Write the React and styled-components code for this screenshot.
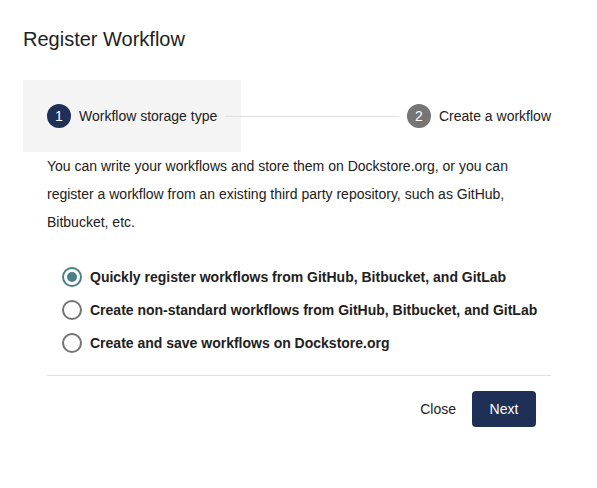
import React, { useState } from "react";
import styled, { createGlobalStyle } from "styled-components";

const GlobalStyle = createGlobalStyle`
  body {
    margin: 0;
    background: #fff;
    font-family: "Liberation Sans", Arial, sans-serif;
    color: rgba(0, 0, 0, 0.87);
  }
`;

const Dialog = styled.div`
  padding: 23px 22px 24px 23px;
`;

const Title = styled.h2`
  margin: 0 0 25px;
  font-size: 20px;
  font-weight: 400;
  line-height: 32px;
  color: #212121;
`;

const StepHeader = styled.div`
  display: flex;
  align-items: center;
  height: 72px;
`;

const Step = styled.div`
  display: flex;
  align-items: center;
  height: 100%;
  padding: 0 24px;
  background: ${(p) => (p.$focused ? "#f4f4f4" : "transparent")};
  box-sizing: border-box;
`;

const StepIcon = styled.div`
  width: 24px;
  height: 24px;
  border-radius: 50%;
  background: ${(p) => (p.$active ? "#1f3056" : "#757575")};
  color: #fff;
  display: flex;
  align-items: center;
  justify-content: center;
  font-size: 14px;
  margin-right: 8px;
`;

const StepLabel = styled.span`
  font-size: 14px;
  color: #212121;
  white-space: nowrap;
`;

const Line = styled.div`
  flex: 1;
  border-top: 1px solid #e0e0e0;
  margin: 0 -16px;
`;

const Content = styled.div`
  padding: 0 24px;
`;

const Text = styled.p`
  margin: 0;
  font-size: 14px;
  line-height: 28px;
  color: #212121;
`;

const RadioGroup = styled.div`
  display: flex;
  flex-direction: column;
  margin: 24px 0 0 15px;
`;

const RadioRow = styled.label`
  display: flex;
  align-items: center;
  height: 33px;
  cursor: pointer;
`;

const Ring = styled.span`
  width: 20px;
  height: 20px;
  box-sizing: border-box;
  border-radius: 50%;
  border: 2px solid ${(p) => (p.$checked ? "#4a7f85" : "#737373")};
  display: flex;
  align-items: center;
  justify-content: center;
  margin-right: 8px;

  &::after {
    content: "";
    width: 10px;
    height: 10px;
    border-radius: 50%;
    background: #4a7f85;
    display: ${(p) => (p.$checked ? "block" : "none")};
  }
`;

const RadioText = styled.span`
  font-size: 14px;
  font-weight: 700;
  color: #212121;
`;

const Divider = styled.hr`
  border: none;
  border-top: 1px solid #e0e0e0;
  margin: 16px 0 15px;
`;

const Actions = styled.div`
  display: flex;
  justify-content: flex-end;
  padding-right: 15px;
`;

const Button = styled.button`
  height: 36px;
  min-width: 64px;
  padding: 0 16px;
  border: none;
  border-radius: 4px;
  font-family: inherit;
  font-size: 14px;
  cursor: pointer;
  background: ${(p) => (p.$primary ? "#1f3056" : "transparent")};
  color: ${(p) => (p.$primary ? "#fff" : "#212121")};
`;

const options = [
  "Quickly register workflows from GitHub, Bitbucket, and GitLab",
  "Create non-standard workflows from GitHub, Bitbucket, and GitLab",
  "Create and save workflows on Dockstore.org",
];

export default function App() {
  const [choice, setChoice] = useState(0);

  return (
    <Dialog>
      <GlobalStyle />
      <Title>Register Workflow</Title>
      <StepHeader>
        <Step $focused>
          <StepIcon $active>1</StepIcon>
          <StepLabel>Workflow storage type</StepLabel>
        </Step>
        <Line />
        <Step>
          <StepIcon>2</StepIcon>
          <StepLabel>Create a workflow</StepLabel>
        </Step>
      </StepHeader>
      <Content>
        <Text>
          You can write your workflows and store them on Dockstore.org, or you can
          register a workflow from an existing third party repository, such as GitHub,
          Bitbucket, etc.
        </Text>
        <RadioGroup>
          {options.map((o, i) => (
            <RadioRow key={o} onClick={() => setChoice(i)}>
              <Ring $checked={choice === i} />
              <RadioText>{o}</RadioText>
            </RadioRow>
          ))}
        </RadioGroup>
        <Divider />
        <Actions>
          <Button>Close</Button>
          <Button $primary>Next</Button>
        </Actions>
      </Content>
    </Dialog>
  );
}
